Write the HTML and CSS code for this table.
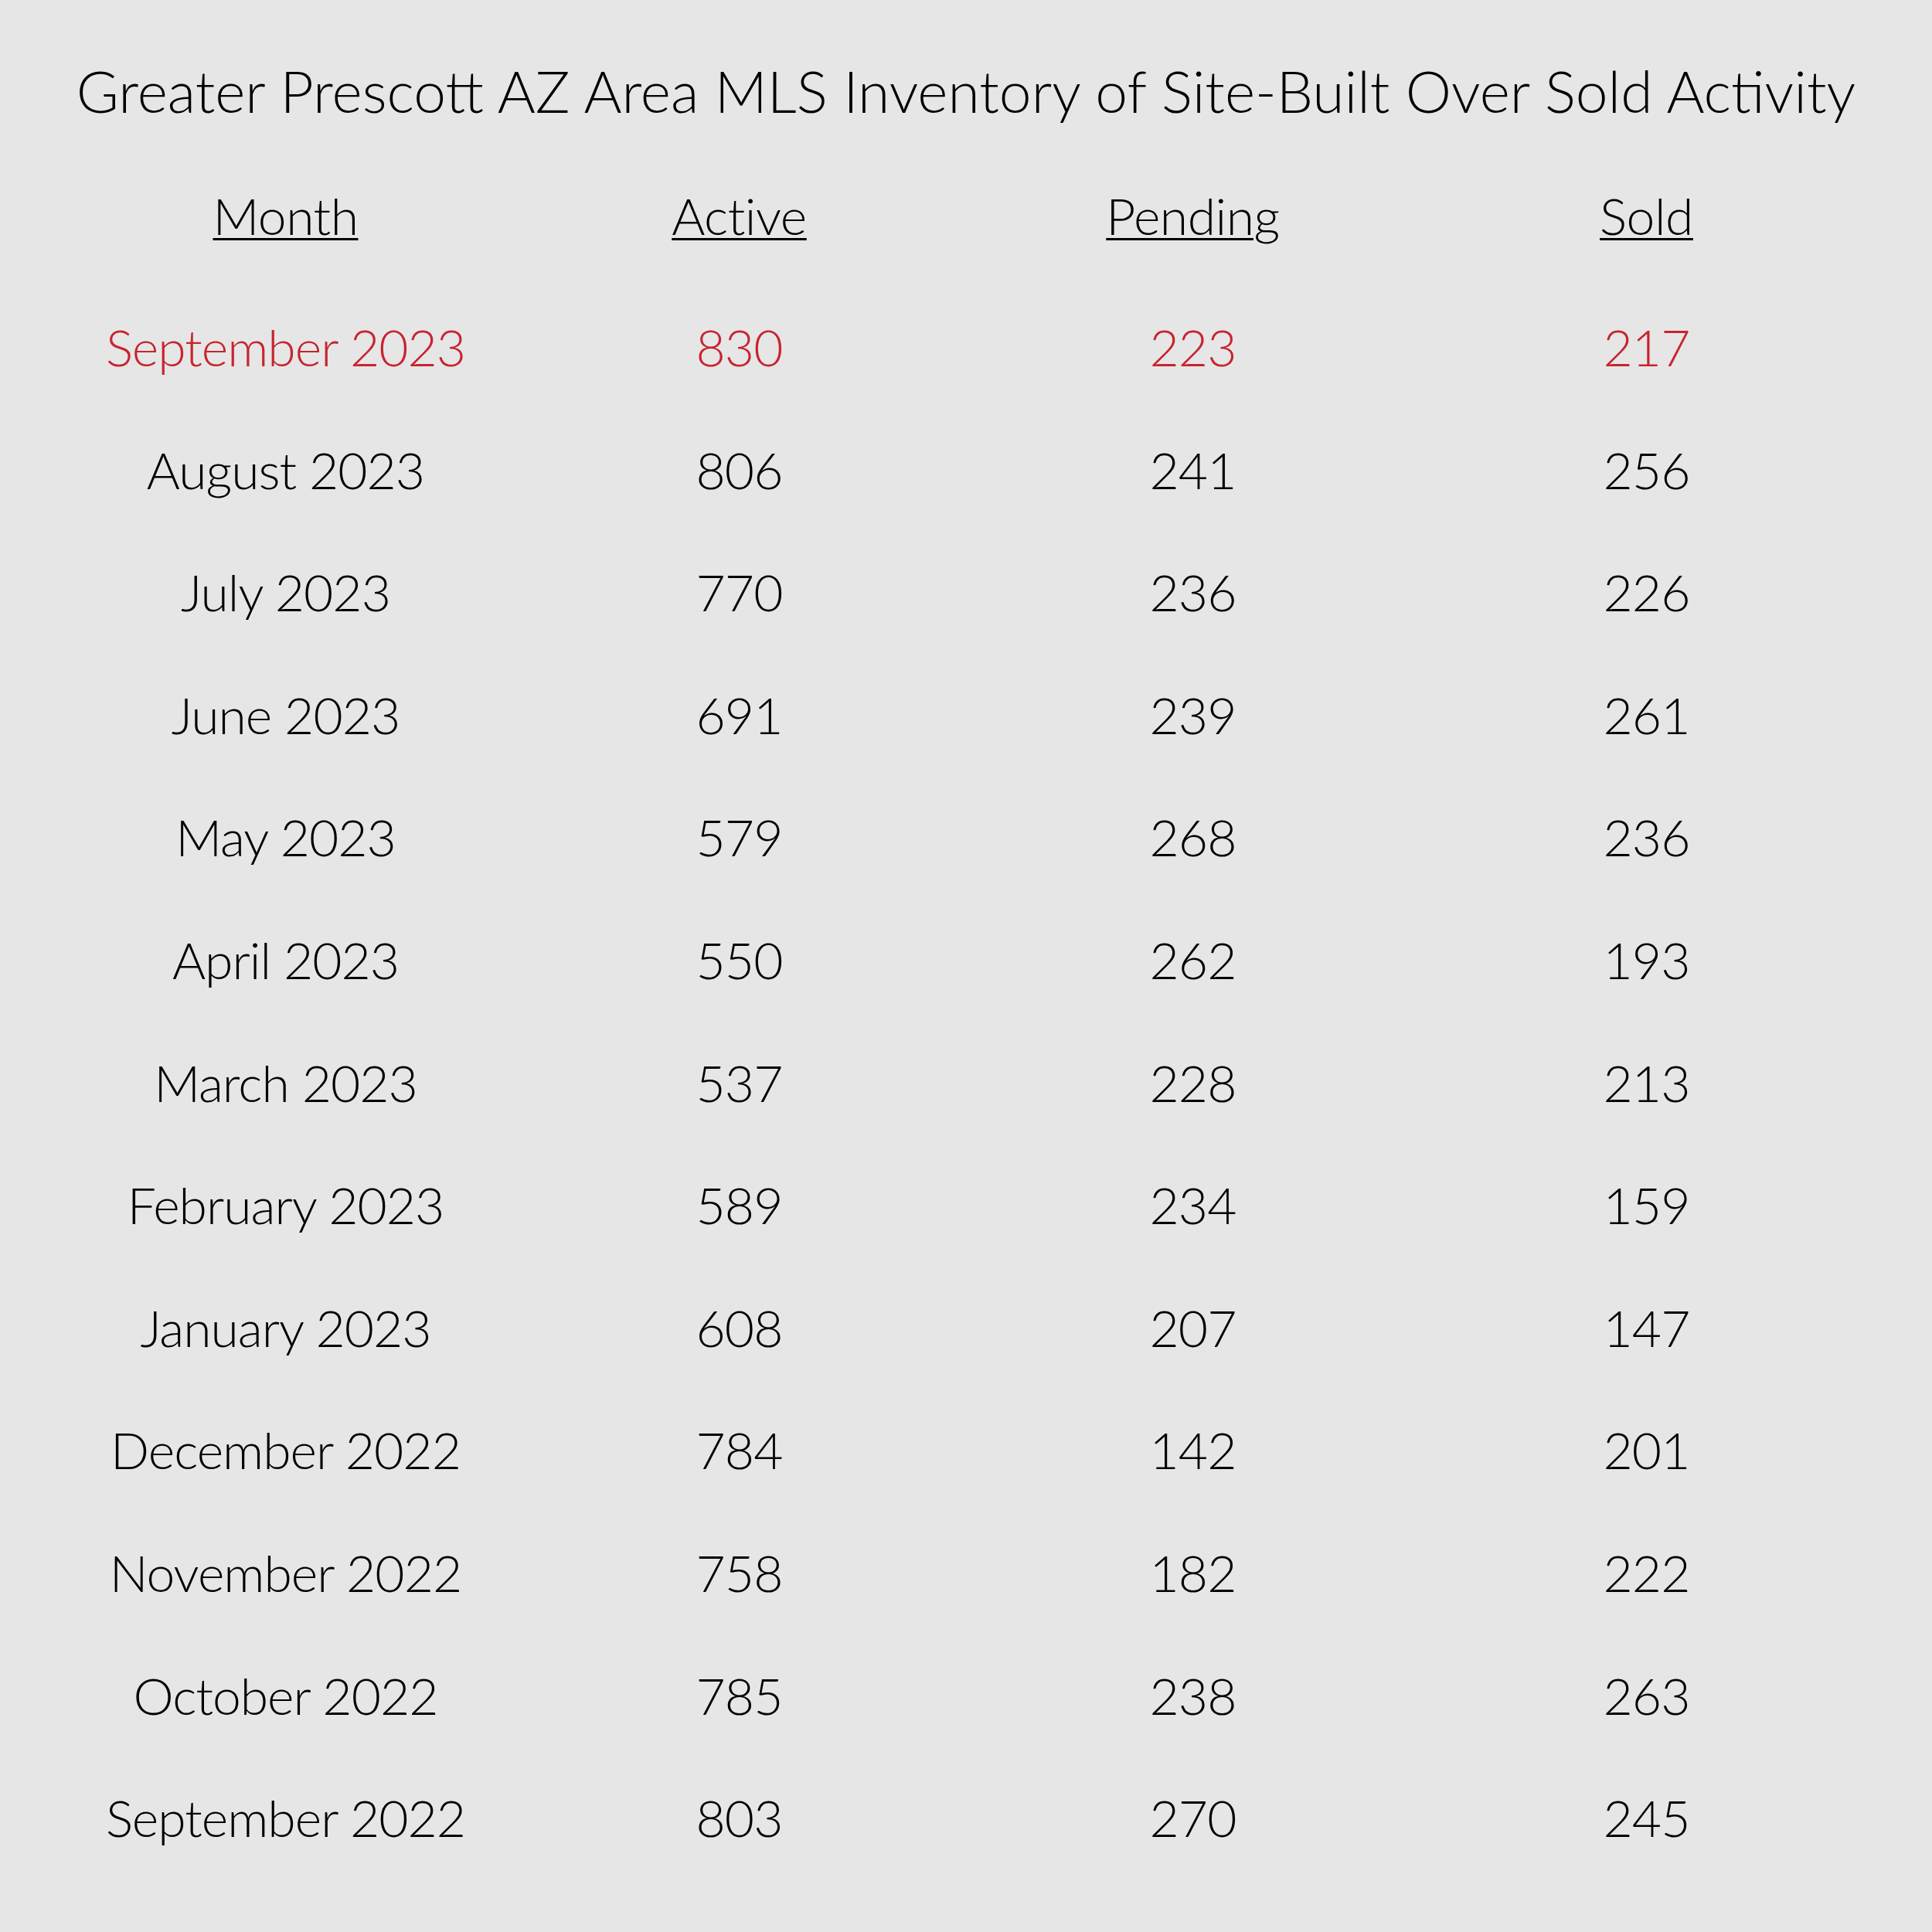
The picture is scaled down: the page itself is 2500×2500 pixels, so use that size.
FILE: index.html
```html
<!DOCTYPE html>
<html lang="en">
<head>
<meta charset="utf-8">
<title>Greater Prescott AZ Area MLS Inventory</title>
<link rel="stylesheet" href="styles.css">
</head>
<body>
<main class="page">
  <h1 class="title">Greater Prescott AZ Area MLS Inventory of Site-Built Over Sold Activity</h1>
  <div class="table">
    <div class="row head">
      <span class="cell"><u>Month</u></span>
      <span class="cell"><u>Active</u></span>
      <span class="cell"><u>Pending</u></span>
      <span class="cell"><u>Sold</u></span>
    </div>
    <div class="row current">
      <span class="cell">September 2023</span><span class="cell">830</span><span class="cell">223</span><span class="cell">217</span>
    </div>
    <div class="row"><span class="cell">August 2023</span><span class="cell">806</span><span class="cell">241</span><span class="cell">256</span></div>
    <div class="row"><span class="cell">July 2023</span><span class="cell">770</span><span class="cell">236</span><span class="cell">226</span></div>
    <div class="row"><span class="cell">June 2023</span><span class="cell">691</span><span class="cell">239</span><span class="cell">261</span></div>
    <div class="row"><span class="cell">May 2023</span><span class="cell">579</span><span class="cell">268</span><span class="cell">236</span></div>
    <div class="row"><span class="cell">April 2023</span><span class="cell">550</span><span class="cell">262</span><span class="cell">193</span></div>
    <div class="row"><span class="cell">March 2023</span><span class="cell">537</span><span class="cell">228</span><span class="cell">213</span></div>
    <div class="row"><span class="cell">February 2023</span><span class="cell">589</span><span class="cell">234</span><span class="cell">159</span></div>
    <div class="row"><span class="cell">January 2023</span><span class="cell">608</span><span class="cell">207</span><span class="cell">147</span></div>
    <div class="row"><span class="cell">December 2022</span><span class="cell">784</span><span class="cell">142</span><span class="cell">201</span></div>
    <div class="row"><span class="cell">November 2022</span><span class="cell">758</span><span class="cell">182</span><span class="cell">222</span></div>
    <div class="row"><span class="cell">October 2022</span><span class="cell">785</span><span class="cell">238</span><span class="cell">263</span></div>
    <div class="row"><span class="cell">September 2022</span><span class="cell">803</span><span class="cell">270</span><span class="cell">245</span></div>
  </div>
</main>
</body>
</html>
```

FILE: styles.css
```css
html, body {
  margin: 0;
  padding: 0;
  background: #e6e6e6;
}

body {
  width: 2500px;
  height: 2500px;
  color: #000;
  font-family: "Lato", "Noto Sans", sans-serif;
  font-weight: 300;
}

.page {
  display: flex;
  flex-direction: column;
  align-items: center;
  padding-top: 67px;
}

.title {
  margin: 0;
  font-size: 75px;
  font-weight: 300;
  line-height: 100px;
  text-align: center;
  white-space: nowrap;
}

.table {
  display: flex;
  flex-direction: column;
  margin-top: 52px;
}

.row {
  display: grid;
  grid-template-columns: repeat(4, 587px);
  height: 158.6px;
  line-height: 158.6px;
  font-size: 66px;
  letter-spacing: -1px;
}

.row.head {
  height: 120px;
  line-height: 120px;
  margin-bottom: 31px;
  letter-spacing: -0.5px;
}

.cell {
  text-align: center;
  white-space: nowrap;
}

.head u {
  text-decoration: underline;
  text-decoration-thickness: 3px;
  text-underline-offset: 4px;
}

.current {
  color: #c8242e;
}
```
